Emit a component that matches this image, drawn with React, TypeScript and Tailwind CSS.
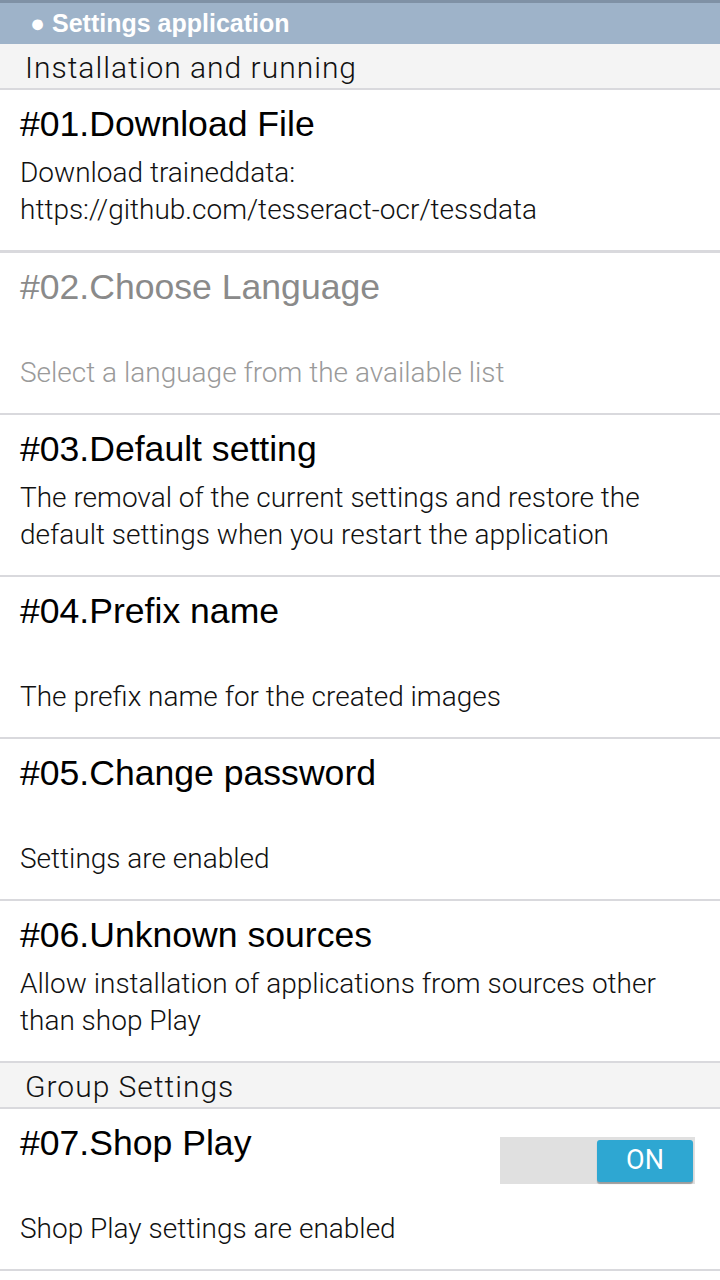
import React from "react";

type Item = {
  title: string;
  lines: string[];
  disabled?: boolean;
  toggle?: boolean;
  thick?: boolean;
};

const install: Item[] = [
  {
    title: "#01.Download File",
    lines: ["Download traineddata:", "https://github.com/tesseract-ocr/tessdata"],
    thick: true,
  },
  { title: "#02.Choose Language", lines: ["Select a language from the available list"], disabled: true },
  {
    title: "#03.Default setting",
    lines: ["The removal of the current settings and restore the", "default settings when you restart the application"],
  },
  { title: "#04.Prefix name", lines: ["The prefix name for the created images"] },
  { title: "#05.Change password", lines: ["Settings are enabled"] },
  {
    title: "#06.Unknown sources",
    lines: ["Allow installation of applications from sources other", "than shop Play"],
  },
];

const group: Item[] = [{ title: "#07.Shop Play", lines: ["Shop Play settings are enabled"], toggle: true }];

const Section = ({ label }: { label: string }) => (
  <div className="h-[46px] bg-[#f4f4f4] border-b-2 border-[#d9d9dd] flex items-center pl-[25px] pt-[3px]">
    <span className="font-['Roboto',sans-serif] font-light text-[30px] tracking-[1px] text-[#111] leading-none">
      {label}
    </span>
  </div>
);

const Row = ({ item }: { item: Item }) => (
  <div
    className={`bg-white border-[#d9d9dd] flex items-start justify-between pl-5 pr-[25px] ${
      item.thick ? "h-[163px] border-b-[3px]" : "h-[162px] border-b-2"
    }`}
  >
    <div className="flex flex-col justify-between h-full pt-[14px] pb-[22px]">
      <div
        className={`font-['Liberation_Sans',Arial,sans-serif] text-[35.6px] leading-[40px] ${
          item.disabled ? "text-[#8a8a8a]" : "text-black"
        }`}
      >
        {item.title}
      </div>
      <div
        className={`font-['Roboto',sans-serif] font-light text-[28px] leading-[37px] ${
          item.disabled ? "text-[#9a9a9a]" : "text-[#111]"
        }`}
      >
        {item.lines.map((l) => (
          <div key={l}>{l}</div>
        ))}
      </div>
    </div>
    {item.toggle && (
      <div className="mt-[28px] w-[195px] h-[47px] bg-[#e0e0e0] flex items-center justify-end pr-[2px]">
        <div className="w-[96px] h-[42px] rounded-[3px] bg-[#2ea7d2] shadow-[0_2px_1px_rgba(0,0,0,0.3)] flex items-center justify-center">
          <span className="font-['Roboto',sans-serif] text-[27px] text-white leading-none">ON</span>
        </div>
      </div>
    )}
  </div>
);

export default function App() {
  return (
    <div className="w-[720px] h-[1280px] bg-white overflow-hidden">
      <div className="h-[44px] bg-[#9eb3c9] border-t-[3px] border-[#7f91a5] flex items-center pl-[30px]">
        <span className="font-['Liberation_Sans',Arial,sans-serif] font-bold text-[25px] text-white leading-none">
          ● Settings application
        </span>
      </div>
      <Section label="Installation and running" />
      {install.map((it) => (
        <Row key={it.title} item={it} />
      ))}
      <Section label="Group Settings" />
      {group.map((it) => (
        <Row key={it.title} item={it} />
      ))}
    </div>
  );
}
